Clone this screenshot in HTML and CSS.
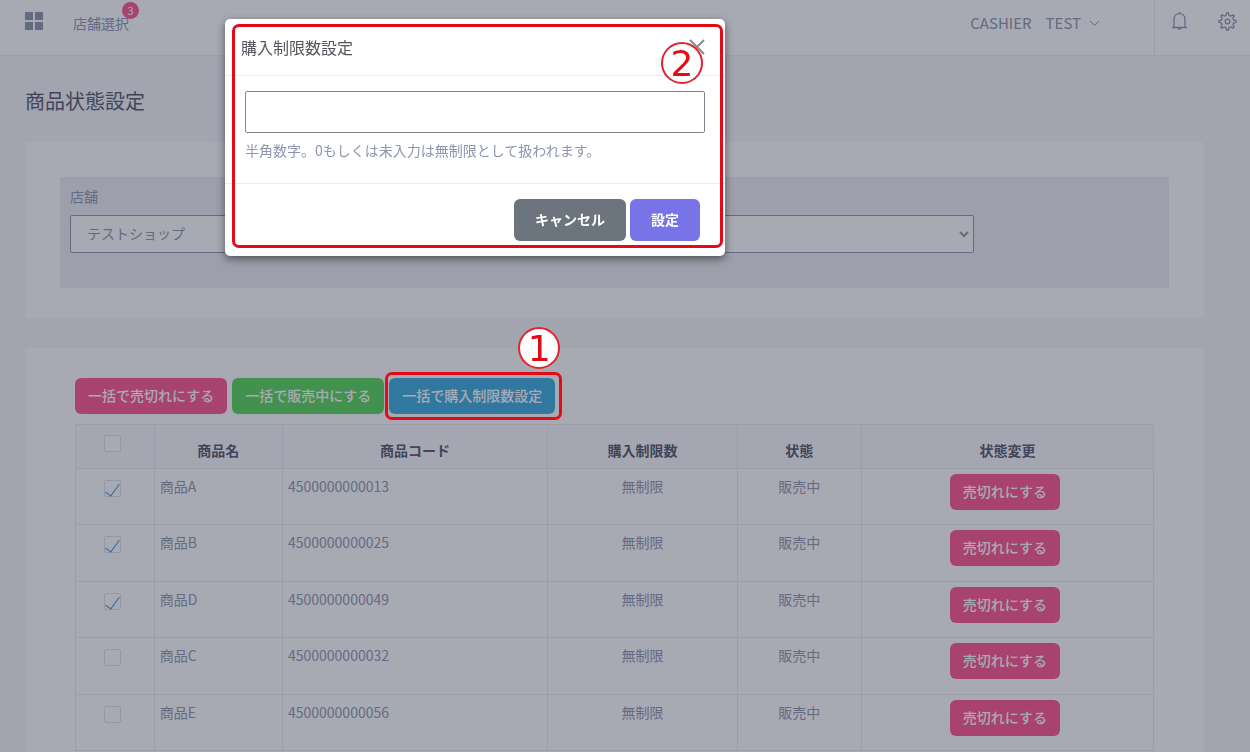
FILE: index.html
```html
<!DOCTYPE html>
<html lang="ja">
<head>
<meta charset="utf-8">
<title>商品状態設定</title>
<link rel="stylesheet" href="styles.css">
</head>
<body>
<div class="page">
  <header class="topbar">
    <button class="icon-btn" type="button" aria-label="メニュー">
      <svg width="18" height="18" viewBox="0 0 18 18" fill="currentColor"><path d="M0 0h8v8H0zM10 0h8v8h-8zM0 10h8v8H0zM10 10h8v8h-8z"/></svg>
    </button>
    <a class="store-link" href="#">店舗選択<span class="count">3</span></a>
    <button class="user" type="button">
      <span>CASHIER</span><span>TEST</span>
      <svg width="11" height="7" viewBox="0 0 11 7" fill="none" stroke="currentColor"><path d="M1 1l4.500 4.500L10 1"/></svg>
    </button>
    <div class="tools">
      <button class="icon-btn" type="button" aria-label="通知">
        <svg width="17" height="18" viewBox="0 0 17 18" fill="none" stroke="currentColor" stroke-width="1.300"><path d="M1 15.500h15M3 15.500V7.500C3 4 5.300 1.700 8.500 1.700S14 4 14 7.500v8M8.500 0v2M7 16c.2 1.500 2.800 1.500 3 0"/></svg>
      </button>
      <button class="icon-btn" type="button" aria-label="設定">
        <svg width="19" height="19" viewBox="0 0 19 19" fill="none" stroke="currentColor" stroke-width="1.300"><path d="M8.700 1h1.600l.8 2.500 1.500.6 2.400-1.200 1.100 1.100-1.200 2.400.6 1.500 2.500.8v1.600l-2.500.8-.6 1.500 1.200 2.400-1.100 1.100-2.400-1.200-1.500.6-.8 2.500H8.700l-.8-2.500-1.500-.6-2.400 1.200-1.100-1.100 1.200-2.400-.6-1.500L1 10.300V8.700l2.500-.8.6-1.500L2.900 4 4 2.900l2.400 1.200 1.500-.6z"/><circle cx="9.500" cy="9.500" r="2.300"/></svg>
      </button>
    </div>
  </header>

  <main class="content">
    <h1>商品状態設定</h1>

    <section class="card">
      <div class="filter">
        <label for="store">店舗</label>
        <div class="select-wrap">
          <select id="store"><option>テストショップ</option></select>
          <svg class="caret" width="10" height="7" viewBox="0 0 10 7" fill="none" stroke="currentColor" stroke-width="2"><path d="M1 1l4 4 4-4"/></svg>
        </div>
      </div>
    </section>

    <section class="card card-list">
      <div class="actions">
        <button class="btn pink" type="button">一括で売切れにする</button>
        <button class="btn green" type="button">一括で販売中にする</button>
        <div class="marked">
          <button class="btn blue" type="button">一括で購入制限数設定</button>
          <span class="frame"></span>
          <span class="step">1</span>
        </div>
      </div>
      <table>
        <colgroup><col class="c-check"><col class="c-name"><col class="c-code"><col class="c-limit"><col class="c-state"><col class="c-change"></colgroup>
        <thead>
          <tr><th><input type="checkbox" aria-label="すべて選択"></th><th>商品名</th><th>商品コード</th><th>購入制限数</th><th>状態</th><th>状態変更</th></tr>
        </thead>
        <tbody>
          <tr><td><input type="checkbox" aria-label="商品A" checked></td><td>商品A</td><td>4500000000013</td><td>無制限</td><td>販売中</td><td><button class="btn pink" type="button">売切れにする</button></td></tr>
          <tr><td><input type="checkbox" aria-label="商品B" checked></td><td>商品B</td><td>4500000000025</td><td>無制限</td><td>販売中</td><td><button class="btn pink" type="button">売切れにする</button></td></tr>
          <tr><td><input type="checkbox" aria-label="商品D" checked></td><td>商品D</td><td>4500000000049</td><td>無制限</td><td>販売中</td><td><button class="btn pink" type="button">売切れにする</button></td></tr>
          <tr><td><input type="checkbox" aria-label="商品C"></td><td>商品C</td><td>4500000000032</td><td>無制限</td><td>販売中</td><td><button class="btn pink" type="button">売切れにする</button></td></tr>
          <tr><td><input type="checkbox" aria-label="商品E"></td><td>商品E</td><td>4500000000056</td><td>無制限</td><td>販売中</td><td><button class="btn pink" type="button">売切れにする</button></td></tr>
        </tbody>
      </table>
    </section>
  </main>
</div>

<div class="backdrop"></div>
<div class="modal" role="dialog" aria-labelledby="modal-title">
  <div class="modal-head">
    <h2 id="modal-title">購入制限数設定</h2>
    <button class="close" type="button" aria-label="閉じる">
      <svg width="16" height="16" viewBox="0 0 16 16" fill="none" stroke="currentColor" stroke-width="2"><path d="M1 1l14 14M15 1L1 15"/></svg>
    </button>
  </div>
  <div class="modal-body">
    <input id="limit" type="text">
    <label for="limit">半角数字。0もしくは未入力は無制限として扱われます。</label>
  </div>
  <div class="modal-foot">
    <button class="btn gray" type="button">キャンセル</button>
    <button class="btn purple" type="button">設定</button>
  </div>
  <span class="frame"></span>
  <span class="step">2</span>
</div>
</body>
</html>
```
FILE: styles.css
```css
* { box-sizing: border-box; }

body {
  margin: 0;
  font: 14px/20px "Noto Sans CJK JP", sans-serif;
  color: #8f94af;
}

button, input, select { font: inherit; color: inherit; }
button { border: 0; background: none; padding: 0; }
svg { display: block; }
h1, h2 { margin: 0; font-weight: 400; }

.page {
  height: 100vh;
  overflow: hidden;
  background: #f5f5fb;
}

.topbar {
  display: flex;
  align-items: flex-start;
  height: 56px;
  padding-left: 25px;
  background: #fff;
  border-bottom: 1px solid #ebebf3;
}
.topbar .icon-btn { padding-top: 12px; }
.store-link {
  position: relative;
  margin: 13px auto 0 30px;
  color: inherit;
  text-decoration: none;
}
.count {
  position: absolute;
  top: -11px;
  right: -10px;
  width: 17px;
  height: 17px;
  border-radius: 50%;
  background: #ff538c;
  color: #fff;
  font-size: 11px;
  line-height: 17px;
  text-align: center;
}
.user {
  display: flex;
  align-items: center;
  gap: 14px;
  padding-top: 13px;
  font-size: 15px;
}
.user svg { margin-left: -6px; }
.tools {
  display: flex;
  align-items: flex-start;
  gap: 30px;
  height: 55px;
  margin-left: 54px;
  padding: 0 13px 0 16px;
  border-left: 1px solid #ebebf3;
}

.content { padding: 30px 46px 0 25px; }
h1 {
  font-size: 20px;
  line-height: 30px;
  color: #54586a;
}

.card {
  margin-top: 26px;
  padding: 35px 35px 30px;
  border-radius: 4px;
  background: #fff;
}
.card-list {
  margin-top: 30px;
  padding: 30px 50px;
}
.filter {
  padding: 9px 10px 35px;
  background: #edeef4;
}
.filter label { display: block; }
.select-wrap {
  position: relative;
  width: 83%;
  margin-top: 9px;
}
.select-wrap select {
  appearance: none;
  display: block;
  width: 100%;
  height: 38px;
  padding: 0 16px 2px;
  border: 1px solid #8f94af;
  border-radius: 2px;
  background: #fff;
}
.caret {
  position: absolute;
  right: 5px;
  top: 16px;
}

.actions {
  display: flex;
  gap: 5px;
}
.btn {
  height: 36px;
  padding: 0 13px 2px;
  border-radius: 6px;
  color: #fff;
  font-weight: 500;
}
.pink { background: #ff538c; }
.green { background: #57d558; }
.blue { background: #3aace1; }
.gray { background: #6c757d; }
.purple { background: #7874e8; }

.marked { position: relative; }
.frame {
  position: absolute;
  z-index: 20;
  inset: -6px -7px -6px -4px;
  border: 3px solid #e30b15;
  border-radius: 7px;
  pointer-events: none;
}
.step {
  position: absolute;
  z-index: 21;
  top: -51px;
  right: -5px;
  width: 42px;
  height: 42px;
  border: 2px solid #e5232c;
  border-radius: 50%;
  background: #fff;
  color: #e30b15;
  font: 36px/40px "DejaVu Sans", sans-serif;
  text-align: center;
}

table {
  width: 100%;
  margin-top: 10px;
  border-collapse: collapse;
  table-layout: fixed;
}
.c-check { width: 7.3%; }
.c-name { width: 11.9%; }
.c-code { width: 24.6%; }
.c-limit { width: 17.6%; }
.c-state { width: 11.5%; }
th, td {
  border: 1px solid #e9eaf1;
  padding: 5px;
  vertical-align: top;
  text-align: center;
}
th {
  height: 44px;
  padding-top: 15px;
  background: #f8f8fc;
  color: #54586a;
  font-weight: 700;
}
th:first-child { padding-top: 10px; }
td { height: 56px; padding-top: 7px; }
tr:nth-child(even) td { height: 57px; }
td:first-child { padding-top: 11px; }
td:last-child { padding: 5px 0 0; }
td:last-child .btn { margin-right: 5px; }
td:nth-child(2), td:nth-child(3) { text-align: left; }

input[type="checkbox"] {
  appearance: none;
  display: block;
  width: 17px;
  height: 17px;
  margin: 0 auto;
  border: 1px solid #dfe0ea;
  border-radius: 2px;
  background: #fff;
}
th:first-child, td:first-child { padding-right: 10px; }
input[type="checkbox"]:checked::after {
  content: "";
  display: block;
  width: 6px;
  height: 14px;
  margin: 0 0 0 4px;
  border: solid #3a8ad6;
  border-width: 0 1px 1px 0;
  transform: rotate(36deg);
}

.backdrop {
  position: fixed;
  z-index: 10;
  inset: 0;
  background: rgba(38, 42, 66, 0.4);
}
.modal {
  position: fixed;
  z-index: 15;
  top: 19px;
  left: 18%;
  width: 40%;
  min-width: 400px;
  border-radius: 5px;
  background: #fff;
  box-shadow: 0 3px 9px rgba(0, 0, 0, 0.5);
}
.modal-head {
  display: flex;
  justify-content: space-between;
  align-items: center;
  padding: 16px 20px 16px 16px;
  border-bottom: 1px solid #e9ecef;
}
.modal h2 {
  font-size: 16px;
  line-height: 24px;
  color: #54565e;
}
.close { color: #888b90; }
.modal-body { padding: 15px 20px 23px; }
.modal-body input {
  display: block;
  width: 100%;
  height: 42px;
  margin-bottom: 7px;
  padding: 0 16px;
  border: 1px solid #83838f;
  border-radius: 2px;
}
.modal-body label { display: block; }
.modal-foot {
  display: flex;
  justify-content: flex-end;
  gap: 4px;
  padding: 15px 25px;
  border-top: 1px solid #e9ecef;
}
.modal-foot .btn {
  height: 42px;
  padding: 0 21px 2px;
  font-weight: 700;
}
.modal .frame {
  inset: 5px 2px 8px 7px;
}
.modal .step {
  top: 23px;
  right: 22px;
}
```
